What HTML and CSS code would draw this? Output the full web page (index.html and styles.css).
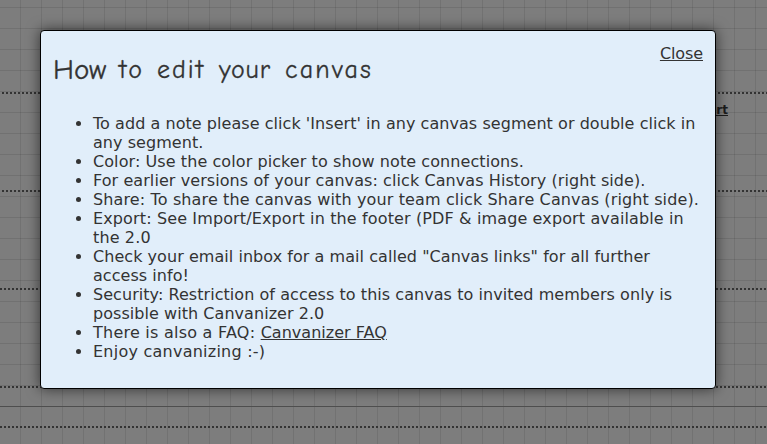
FILE: index.html
```html
<!DOCTYPE html>
<html lang="en">
<head>
<meta charset="utf-8">
<title>Canvas help</title>
<link rel="stylesheet" href="styles.css">
</head>
<body>
<div class="board" aria-hidden="true">
  <div class="row first"></div>
  <div class="row"><a class="insert">Insert</a></div>
  <div class="row"></div>
  <div class="row shifted"></div>
  <div class="footer"></div>
</div>
<main class="dialog">
  <header class="head">
    <h1 class="title"><span class="how">How</span><span class="to">to</span><span class="edit">edit</span><span class="your">your</span><span class="canvas">canvas</span></h1>
    <a class="close" href="#">Close</a>
  </header>
  <ul class="tips">
    <li class="snug">To add a note please click 'Insert' in any canvas segment or double click in<br>any segment.</li>
    <li>Color: Use the color picker to show note connections.</li>
    <li>For earlier versions of your canvas: click Canvas History (right side).</li>
    <li class="loose">Share: To share the canvas with your team click Share Canvas (right side).</li>
    <li class="loose">Export: See Import/Export in the footer (PDF &amp; image export available in<br>the 2.0</li>
    <li class="snug">Check your email inbox for a mail called "Canvas links" for all further<br>access info!</li>
    <li class="snug">Security: Restriction of access to this canvas to invited members only is<br>possible with Canvanizer 2.0</li>
    <li class="faq">There is also a FAQ: <a href="#">Canvanizer FAQ</a></li>
    <li class="faq">Enjoy canvanizing :-)</li>
  </ul>
</main>
</body>
</html>
```
FILE: styles.css
```css
* { box-sizing: border-box; }
body {
  margin: 0;
  width: 767px;
  height: 444px;
  overflow: hidden;
  position: relative;
  color: #333;
  font: 16px/19px "DejaVu Sans", sans-serif;
  background-color: #7d7d7d;
}
a { color: inherit; }
.board {
  height: 444px;
  background:
    repeating-linear-gradient(90deg, transparent 0 20px, rgba(0,0,0,.09) 20px 21px),
    linear-gradient(#7d7d7d, #7d7d7d) 0 407px / 100% 37px no-repeat,
    repeating-linear-gradient(#7d7d7d 0 7px, #717171 7px 8px, #7d7d7d 8px 21px);
}
.row {
  height: 98px;
  background: repeating-linear-gradient(90deg, transparent 0 2px, #333 2px 4px) 0 0 / 100% 2px no-repeat;
}
.row.first { height: 92px; background: none; }
.row:nth-child(2) { display: flex; justify-content: flex-end; padding: 9px 39px 0 0; }
.row.shifted { background-image: repeating-linear-gradient(90deg, #333 0 2px, transparent 2px 4px); }
.insert { font-size: 12px; font-weight: bold; text-decoration: underline; color: #1c1c1c; }
.footer {
  height: 58px;
  background:
    repeating-linear-gradient(90deg, #333 0 2px, transparent 2px 4px) 0 0 / 100% 2px no-repeat,
    linear-gradient(#4e4e4e, #4e4e4e) 0 20px / 100% 1px no-repeat,
    repeating-linear-gradient(90deg, #333 0 2px, transparent 2px 4px) 0 40px / 100% 2px no-repeat;
}
.dialog {
  position: absolute;
  left: 40px;
  top: 30px;
  width: 676px;
  height: 359px;
  padding: 12px;
  border: 1px solid #000;
  border-radius: 4px;
  background: #e1eefa;
  box-shadow: 0 0 14px rgba(0,0,0,.6);
}
.head { display: flex; justify-content: space-between; height: 71px; }
.title {
  display: flex;
  gap: 14px;
  margin: 7px 0 0;
  font: 400 26px/40px "Comic Neue", "Patrick Hand", Lato, sans-serif;
  -webkit-text-stroke: .3px #333;
}
.how { width: 52px; font-size: 29px; }
.to { width: 24px; letter-spacing: 2.5px; }
.edit { width: 48px; letter-spacing: 2px; }
.your { width: 52px; letter-spacing: .8px; }
.canvas { letter-spacing: 2.2px; }
.close { height: 19px; margin-top: 1px; letter-spacing: -.1px; }
.tips { margin: 0; padding-left: 40px; white-space: nowrap; letter-spacing: .08px; }
.tips .snug { letter-spacing: .05px; }
.tips .loose { letter-spacing: .13px; }
.tips .faq { letter-spacing: .24px; }
.tips .faq a { letter-spacing: .02px; }
```
